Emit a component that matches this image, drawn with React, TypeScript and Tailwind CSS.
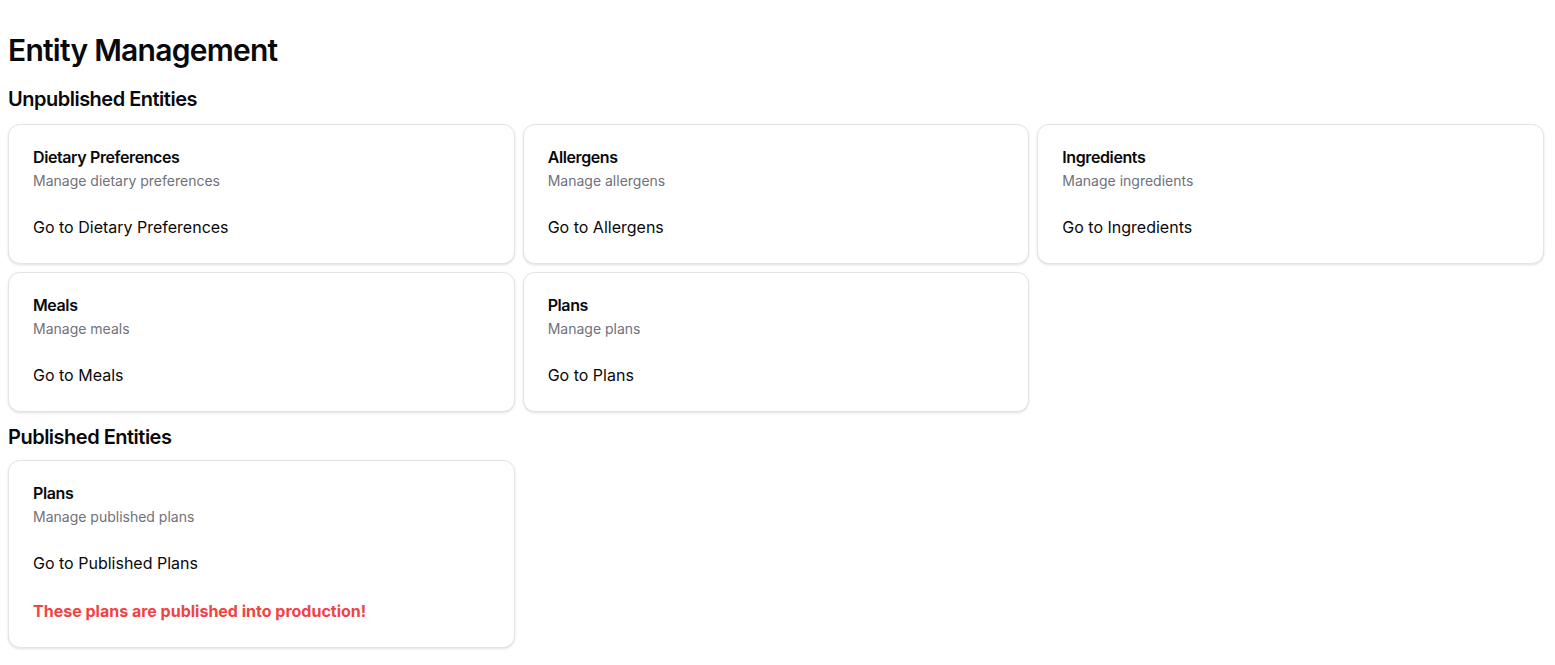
interface EntityCardProps {
  title: string;
  description: string;
  link: string;
  warning?: string;
}

const unpublished: EntityCardProps[] = [
  { title: 'Dietary Preferences', description: 'Manage dietary preferences', link: 'Go to Dietary Preferences' },
  { title: 'Allergens', description: 'Manage allergens', link: 'Go to Allergens' },
  { title: 'Ingredients', description: 'Manage ingredients', link: 'Go to Ingredients' },
  { title: 'Meals', description: 'Manage meals', link: 'Go to Meals' },
  { title: 'Plans', description: 'Manage plans', link: 'Go to Plans' },
];

const published: EntityCardProps[] = [
  {
    title: 'Plans',
    description: 'Manage published plans',
    link: 'Go to Published Plans',
    warning: 'These plans are published into production!',
  },
];

const EntityCard = (props: EntityCardProps) => {
  const { title, description, link, warning } = props;

  return (
    <div className="rounded-xl border border-zinc-200 bg-white text-zinc-950 shadow-sm">
      <div className="flex flex-col gap-1.5 p-6">
        <h3 className="font-semibold leading-none tracking-tight text-base">{title}</h3>
        <p className="text-sm text-[#71717a]">{description}</p>
      </div>
      <div className="px-6 pb-6">
        <a className="block text-base leading-6">{link}</a>
        {warning && <p className="mt-6 text-base leading-6 font-bold text-[#ef4444]">{warning}</p>}
      </div>
    </div>
  );
};

const App = () => {
  return (
    <div className="min-h-screen bg-white p-2 text-zinc-950" style={{ fontFamily: 'Inter, "Noto Sans", sans-serif' }}>
      <div className="max-w-[1536px]">
        <h1 className="mt-6 text-3xl font-semibold leading-9 tracking-tight">Entity Management</h1>

        <h2 className="mt-[17px] mb-[11px] text-xl font-semibold leading-7 tracking-tight">Unpublished Entities</h2>
        <div className="grid grid-cols-3 gap-2">
          {unpublished.map((item) => (
            <EntityCard key={item.title} {...item} />
          ))}
        </div>

        <h2 className="mt-[11px] mb-[9px] text-xl font-semibold leading-7 tracking-tight">Published Entities</h2>
        <div className="grid grid-cols-3 gap-2">
          {published.map((item) => (
            <EntityCard key={item.title} {...item} />
          ))}
        </div>
      </div>
    </div>
  );
};

export default App;
